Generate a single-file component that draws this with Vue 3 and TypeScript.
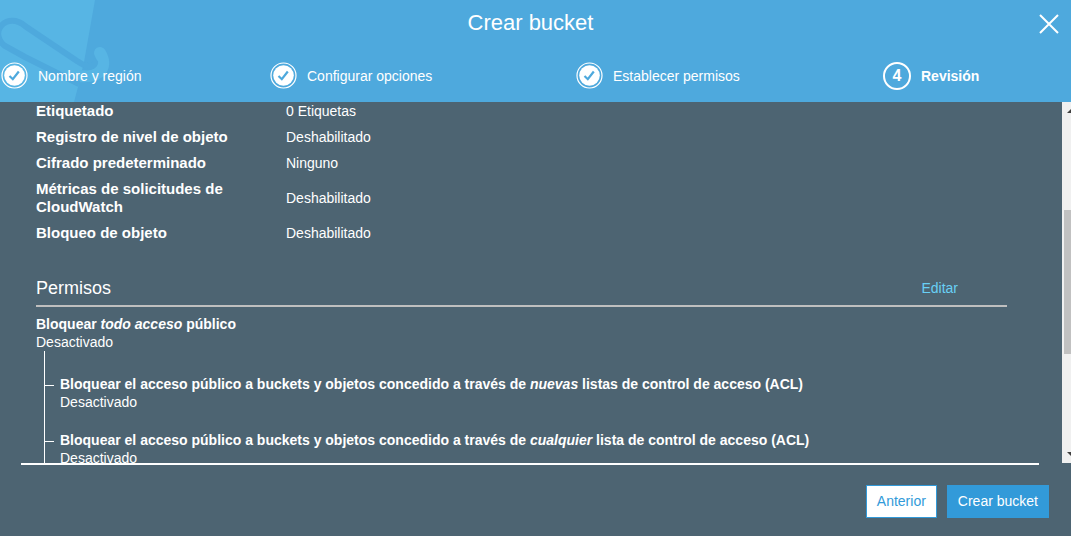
<script setup lang="ts">
interface Step { label: string; done: boolean }
interface Property { name: string; value: string }
interface AccessRule { before: string; emphasis: string; after: string; state: string }

const steps: Step[] = [
  { label: 'Nombre y región', done: true },
  { label: 'Configurar opciones', done: true },
  { label: 'Establecer permisos', done: true },
  { label: 'Revisión', done: false },
]

const properties: Property[] = [
  { name: 'Etiquetado', value: '0 Etiquetas' },
  { name: 'Registro de nivel de objeto', value: 'Deshabilitado' },
  { name: 'Cifrado predeterminado', value: 'Ninguno' },
  { name: 'Métricas de solicitudes de CloudWatch', value: 'Deshabilitado' },
  { name: 'Bloqueo de objeto', value: 'Deshabilitado' },
]

const rules: AccessRule[] = [
  {
    before: 'Bloquear el acceso público a buckets y objetos concedido a través de ',
    emphasis: 'nuevas',
    after: ' listas de control de acceso (ACL)',
    state: 'Desactivado',
  },
  {
    before: 'Bloquear el acceso público a buckets y objetos concedido a través de ',
    emphasis: 'cualquier',
    after: ' lista de control de acceso (ACL)',
    state: 'Desactivado',
  },
]
</script>

<template>
  <main class="wizard">
    <header class="header">
      <svg class="bucket" width="120" height="102" viewBox="0 0 120 102" aria-hidden="true">
        <path d="M0 0H95L84 62L78 87L74 102H0Z" fill="#57b5e4" />
        <path d="M78 76C88 77 97 76 101 70C105 64 103 58 100 53" fill="none" stroke="#57b5e4" stroke-width="12" stroke-linecap="round" />
        <path d="M84 62C89 64 93 64 94 58L98 61C99 67 93 71 84 70Z" fill="#4ea9dd" />
        <path d="M88 66C84 66 80 63 77 61L25 26C17 19 7 19 1 26C-4 32 -2 41 5 46L25 57L79 84" fill="none" stroke="#4ea9dd" stroke-width="6" />
      </svg>
      <div class="title-row">
        <h1>Crear bucket</h1>
        <button class="close" type="button" aria-label="Cerrar">
          <svg width="20" height="20" viewBox="0 0 20 20">
            <path d="M1 1L19 19M19 1L1 19" fill="none" stroke="#fff" stroke-width="2" />
          </svg>
        </button>
      </div>
      <ol class="steps">
        <li v-for="(step, i) in steps" :key="step.label" :class="{ current: !step.done }">
          <svg v-if="step.done" class="mark" width="28" height="28" viewBox="0 0 28 28" aria-hidden="true">
            <circle cx="14.5" cy="13.5" r="12.5" fill="none" stroke="#fff" stroke-width="1.2" />
            <circle cx="14.5" cy="13.5" r="10.3" fill="#fff" />
            <path d="M9.5 14L12.8 17.2L18.8 9.5" fill="none" stroke="#4ea9dd" stroke-width="2.2" />
          </svg>
          <span v-else class="number">{{ i + 1 }}</span>
          <span>{{ step.label }}</span>
        </li>
      </ol>
    </header>

    <div class="body">
      <div class="content">
        <dl class="properties">
          <div v-for="item in properties" :key="item.name" class="property">
            <dt>{{ item.name }}</dt>
            <dd>{{ item.value }}</dd>
          </div>
        </dl>
        <section>
          <div class="section-head">
            <h2>Permisos</h2>
            <a href="#">Editar</a>
          </div>
          <div class="rule">
            <strong>Bloquear <em>todo acceso</em> público</strong>
            <span>Desactivado</span>
          </div>
          <ul class="tree">
            <li v-for="rule in rules" :key="rule.emphasis" class="rule">
              <strong>{{ rule.before }}<em>{{ rule.emphasis }}</em>{{ rule.after }}</strong>
              <span>{{ rule.state }}</span>
            </li>
          </ul>
        </section>
      </div>
      <div class="scrollbar" aria-hidden="true">
        <svg class="arrow" width="8" height="4" viewBox="0 0 8 4"><path d="M0 4L4 0L8 4Z" fill="#404040" /></svg>
        <div class="track"><div class="thumb"></div></div>
        <svg class="arrow" width="8" height="4" viewBox="0 0 8 4"><path d="M0 0L4 4L8 0Z" fill="#404040" /></svg>
      </div>
    </div>

    <footer class="footer">
      <button class="btn" type="button">Anterior</button>
      <button class="btn primary" type="button">Crear bucket</button>
    </footer>
  </main>
</template>

<style>
body {
  margin: 0;
  background: #4d6472;
}
</style>

<style scoped>
.wizard {
  display: flex;
  flex-direction: column;
  height: 100vh;
  color: #fff;
  background: #4d6472;
  font: 14px/18px "Liberation Sans", Arial, sans-serif;
}
.header {
  position: relative;
  flex: none;
  background: #4ea9dd;
}
.bucket {
  position: absolute;
  top: 0;
  left: 0;
}
.title-row {
  position: relative;
  display: grid;
  grid-template-columns: 44px 1fr 44px;
  align-items: center;
  height: 48px;
}
h1 {
  grid-column: 2;
  margin: 0;
  padding: 0 10px 2px 0;
  font-size: 22px;
  font-weight: 400;
  line-height: 24px;
  text-align: center;
}
.close {
  padding: 0;
  border: 0;
  background: none;
  height: 20px;
  justify-self: center;
}
.close svg {
  display: block;
}
.steps {
  position: relative;
  display: grid;
  grid-template-columns: 269fr 306fr 308fr 188fr;
  margin: 0;
  padding: 14px 0 12px;
  list-style: none;
}
.steps li {
  display: flex;
  align-items: center;
  gap: 10px;
  height: 28px;
}
.steps .current {
  font-weight: 700;
}
.number {
  display: grid;
  place-items: center;
  box-sizing: border-box;
  width: 28px;
  height: 28px;
  border: 2px solid #fff;
  border-radius: 50%;
  font-size: 16px;
}
.body {
  display: flex;
  flex: 1;
  min-height: 0;
  position: relative;
}
.body::after {
  content: "";
  position: absolute;
  left: 21px;
  right: 32px;
  top: 100%;
  height: 2px;
  background: #fff;
}
.content {
  flex: 1;
  min-width: 0;
  padding: 0 55px 0 36px;
  overflow-y: auto;
  scrollbar-width: none;
}
.properties {
  display: grid;
  gap: 8px;
  margin: 0;
}
.property {
  display: grid;
  grid-template-columns: 210px 1fr;
  column-gap: 40px;
  align-items: center;
}
dt {
  font-size: 15px;
  font-weight: 700;
}
dd {
  margin: 0;
}
.section-head {
  display: flex;
  justify-content: space-between;
  align-items: center;
  margin-top: 36px;
  padding: 0 49px 7px 0;
  border-bottom: 2px solid #bfbfbf;
}
h2 {
  margin: 0;
  font-size: 18px;
  font-weight: 400;
  line-height: 20px;
}
a {
  color: #69d0f5;
  text-decoration: none;
}
.section-head + .rule {
  margin-top: 8px;
}
.rule {
  display: flex;
  flex-direction: column;
}
.tree {
  display: grid;
  gap: 20px;
  margin: 0 0 0 8px;
  padding: 24px 0 20px 15px;
  border-left: 1px solid #fff;
  list-style: none;
}
.tree .rule {
  position: relative;
}
.tree .rule::before {
  content: "";
  position: absolute;
  top: 10px;
  left: -15px;
  width: 9px;
  height: 1px;
  background: #fff;
}
.scrollbar {
  display: flex;
  flex-direction: column;
  box-sizing: border-box;
  width: 9px;
  padding: 7px 0;
  overflow: hidden;
  background: #f0f0f0;
}
.arrow {
  flex: none;
  margin-left: 5px;
}
.track {
  flex: 1;
  margin: 6px 0 6px 2px;
}
.thumb {
  height: 44%;
  margin-top: 91px;
  background: #c1c1c1;
}
.footer {
  display: flex;
  justify-content: flex-end;
  gap: 10px;
  padding: 22px 22px 18px;
}
.btn {
  height: 33px;
  padding: 0 10px 2px;
  border: 1px solid #329ad9;
  background: #fff;
  color: #329ad9;
  font: inherit;
}
.btn.primary {
  background: #329ad9;
  color: #fff;
}
</style>
